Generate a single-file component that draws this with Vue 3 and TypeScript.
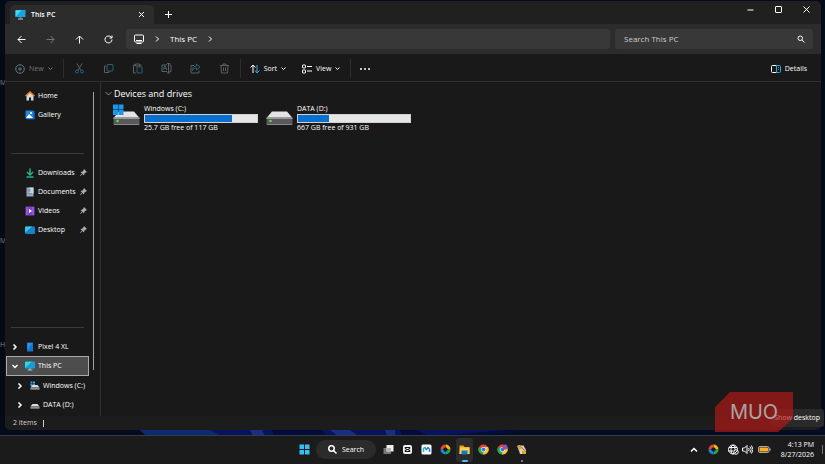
<script setup lang="ts">
import { ref } from 'vue'

interface Place { name: string; icon: string }
interface Drive { name: string; total: number; free: string; used: number; system: boolean }

const quick: Place[] = [
  { name: 'Home', icon: 'home' },
  { name: 'Gallery', icon: 'gallery' },
]
const pinned: Place[] = [
  { name: 'Downloads', icon: 'downloads' },
  { name: 'Documents', icon: 'documents' },
  { name: 'Videos', icon: 'videos' },
  { name: 'Desktop', icon: 'desktop' },
]
const tree = [
  { name: 'Pixel 4 XL', icon: 'phone', child: false },
  { name: 'This PC', icon: 'pc', child: false },
  { name: 'Windows (C:)', icon: 'cdrive', child: true },
  { name: 'DATA (D:)', icon: 'ddrive', child: true },
]
const drives: Drive[] = [
  { name: 'Windows (C:)', total: 117, free: '25.7', used: 78, system: true },
  { name: 'DATA (D:)', total: 931, free: '667', used: 28, system: false },
]
const tools = ['Cut', 'Copy', 'Paste', 'Rename', 'Share', 'Delete']
const apps = ['Task View', 'CapCut', 'Maps', 'Copilot', 'File Explorer', 'Chrome', 'Chrome Profile', 'Paint']
const selected = ref('This PC')
const query = ref('')
</script>

<template>
  <div class="desktop">
    <svg class="wallpaper" viewBox="0 0 825 6" preserveAspectRatio="none" aria-hidden="true">
      <rect width="825" height="6" fill="#050b1a" />
      <path d="M140 0H600L560 6H146Z" fill="#07145a" />
      <path d="M140 0H210L222 6H146Z" fill="#0b2a70" />
      <path d="M250 0h12l3 6h-12zM330 0h20l8 6h-20zM385 0h10v6h-8z" fill="#182f86" />
      <path d="M272 0h50l4 6h-52zM400 0h18l10 6h-26zM505 0h30l-50 6h-50z" fill="#040c3c" />
      <path d="M530 0H825V6H480Z" fill="#050d24" />
    </svg>
    <span class="peek peek-a" aria-hidden="true">M</span>
    <span class="peek peek-b" aria-hidden="true">M</span>
    <span class="peek peek-c" aria-hidden="true">H</span>

    <main class="window">
      <header class="tabs">
        <div class="tab">
          <svg class="i11" viewBox="0 0 22 22"><rect x="1" y="2" width="20" height="14" rx="1" fill="#17a5dd" /><path d="M1 16V3l12-1z" fill="#4cd6ee" /><path d="M9 16h4v3H9z" fill="#4b8196" /><path d="M6 19h10v2H6z" fill="#b5c7cf" /></svg>
          <span class="tab-name">This PC</span>
          <button aria-label="Close tab" class="tab-close"><svg class="i7 line" viewBox="0 0 14 14"><path d="m2 2 10 10M12 2 2 12" /></svg></button>
        </div>
        <button aria-label="New tab" class="tab-new"><svg class="i7 line" viewBox="0 0 14 14"><path d="M7 0v14M0 7h14" /></svg></button>
        <div class="caption">
          <button aria-label="Minimize"><svg class="i7 line" viewBox="0 0 14 14"><path d="M1 8h12" /></svg></button>
          <button aria-label="Maximize"><svg class="i7 line" viewBox="0 0 14 14"><rect x="1" y="1" width="12" height="12" rx="1" /></svg></button>
          <button aria-label="Close"><svg class="i7 line" viewBox="0 0 14 14"><path d="m1 1 12 12M13 1 1 13" /></svg></button>
        </div>
      </header>

      <div class="navbar">
        <div class="history">
          <button aria-label="Back"><svg class="i9 line" viewBox="0 0 18 18"><path d="M17 9H2m7-7L2 9l7 7" /></svg></button>
          <button aria-label="Forward" class="off"><svg class="i9 line" viewBox="0 0 18 18"><path d="M1 9h15M9 2l7 7-7 7" /></svg></button>
          <button aria-label="Up"><svg class="i9 line" viewBox="0 0 18 18"><path d="M9 17V2M2 9l7-7 7 7" /></svg></button>
          <button aria-label="Refresh"><svg class="i9 line" viewBox="0 0 18 18"><path d="M16 9a7 7 0 1 1-2-5l2 2M16 1v5h-5" /></svg></button>
        </div>
        <nav class="address" aria-label="Address">
          <svg class="i10 line" viewBox="0 0 20 20"><rect x="1" y="2" width="18" height="14" rx="2" /><path d="M4 13h12M5 19h10" /></svg>
          <svg class="i6 line" viewBox="0 0 12 12"><path d="m4 1 5 5-5 5" /></svg>
          <a href="#">This PC</a>
          <svg class="i6 line" viewBox="0 0 12 12"><path d="m4 1 5 5-5 5" /></svg>
        </nav>
        <label class="search">
          <input v-model="query" type="text" aria-label="Search This PC" placeholder="Search This PC">
          <svg class="i8 line" viewBox="0 0 16 16"><circle cx="6.5" cy="6.5" r="4.5" /><path d="m10 10 5 5" /></svg>
        </label>
      </div>

      <div class="commands">
        <button class="new-btn off"><svg class="i10 line" viewBox="0 0 20 20"><circle cx="10" cy="10" r="8.5" /><path class="blue" d="M10 6v8M6 10h8" /></svg>New<svg class="i5 line" viewBox="0 0 10 10"><path d="m1 3 4 4 4-4" /></svg></button>
        <span class="rule"></span>
        <div class="tools">
          <button v-for="t in tools" :key="t" :aria-label="t" class="dim">
            <svg class="i11 line" viewBox="0 0 22 22">
              <template v-if="t === 'Cut'"><path d="m6 1 8 14M16 1 8 15" /><g class="blue"><circle cx="6" cy="17" r="3" /><circle cx="16" cy="17" r="3" /></g></template>
              <template v-else-if="t === 'Copy'"><path d="M7 6H3v13h9v-3" /><rect class="blue" x="8" y="3" width="12" height="13" rx="2" /></template>
              <template v-else-if="t === 'Paste'"><path d="M8 20H3V4h4m8 0h3v3M7 2h8v4H7z" /><rect class="blue" x="10" y="8" width="10" height="12" rx="1" /></template>
              <template v-else-if="t === 'Rename'"><path d="M12 4H2v13h10m5 0h3V4h-3M15 1v19m-3-19h6m-6 19h6" /><path class="blue" d="m4 14 4-9 4 9M6 11h5" /></template>
              <template v-else-if="t === 'Share'"><path d="M8 5H2v15h16v-5" /><path class="blue" d="m13 2 7 6-7 6v-4c-4 0-6 1-8 5 0-6 3-9 8-9z" /></template>
              <template v-else><path d="M2 5h18M8 5V2h6v3M4 5l1 15h12l1-15M9 9v7m4-7v7" /></template>
            </svg>
          </button>
        </div>
        <span class="rule"></span>
        <button class="sort-btn"><svg class="i10 line" viewBox="0 0 20 20"><path d="M6 18V2M1 7l5-5 5 5" /><path class="sky" d="M14 2v16m-4-5 4 5 5-5" /></svg>Sort<svg class="i5 line" viewBox="0 0 10 10"><path d="m1 3 4 4 4-4" /></svg></button>
        <button class="view-btn"><svg class="i10 line" viewBox="0 0 20 20"><rect x="1" y="2" width="6" height="6" rx="1" /><rect x="1" y="12" width="6" height="6" rx="1" /><path d="M10 5h10m-10 9h10" /></svg>View<svg class="i5 line" viewBox="0 0 10 10"><path d="m1 3 4 4 4-4" /></svg></button>
        <span class="rule"></span>
        <button aria-label="More" class="more"><svg class="i10" viewBox="0 0 20 20" fill="#fff"><circle cx="2" cy="10" r="2" /><circle cx="10" cy="10" r="2" /><circle cx="18" cy="10" r="2" /></svg></button>
        <button class="details"><svg class="i10 line" viewBox="0 0 20 20"><path d="M11 17H3a2 2 0 0 1-2-2V5q0-2 2-2h8" /><path class="sky" d="M11 3h6q2 0 2 2v10q0 2-2 2h-6zM14 7h2m-2 4h2" /></svg>Details</button>
      </div>

      <div class="body">
        <aside class="sidebar">
          <nav class="places" aria-label="Folders">
            <a v-for="p in [...quick, ...pinned]" :key="p.name" href="#" class="place" :class="{ 'first-pinned': p.name === 'Downloads' }">
              <svg class="i10" viewBox="0 0 20 20">
                <template v-if="p.icon === 'home'"><path d="M3 9v10h5v-6h4v6h5V9l-7-6z" fill="#d6d6d6" /><path d="m1 10 9-8 9 8" fill="none" stroke="#e87624" stroke-width="3" /></template>
                <template v-else-if="p.icon === 'gallery'"><rect x="4" y="2" width="16" height="17" rx="2" fill="#0b54a5" /><rect x="1" y="1" width="16" height="17" rx="2" fill="#2583dc" /><path d="m2 16 6-8 8 8z" fill="#fff" /><circle cx="12" cy="6" r="2" fill="#fff" /></template>
                <template v-else-if="p.icon === 'downloads'"><path d="M10 1v13M4 8l6 6 6-6M3 18h14" fill="none" stroke="#19b68c" stroke-width="3" /></template>
                <template v-else-if="p.icon === 'documents'"><path d="M3 1h14v18H3z" fill="#91a9c1" /><path d="M9 1h8v12H9z" fill="#c5d5e4" /><path d="M6 5h5v4H6zm0 7h8v2H6z" fill="#7690a8" /></template>
                <template v-else-if="p.icon === 'videos'"><rect x="1" y="1" width="18" height="18" rx="2" fill="#8040cd" /><path d="M4 3v14M16 3v14" stroke="#c89af3" stroke-width="2" stroke-dasharray="2 2" /><path d="m8 6 6 4-6 4z" fill="#fff" /></template>
                <template v-else><rect y="3" width="20" height="15" rx="2" fill="#1582cb" /><path d="M0 15V5q0-2 2-2h13z" fill="#35c9dc" /></template>
              </svg>
              <span>{{ p.name }}</span>
              <svg v-if="pinned.includes(p)" class="i7 pin" viewBox="0 0 14 14"><path d="m8 0 6 6-2 1-3 2-1 4-3-3-4 4-1-1 4-4-3-3 4-1 2-3z" fill="#a1adb5" /></svg>
            </a>
            <div class="tree">
              <a v-for="n in tree" :key="n.name" href="#" class="node" :class="{ child: n.child, selected: n.name === selected }" @click.prevent="selected = n.name">
                <svg class="i6 line bold chevron" viewBox="0 0 12 12"><path :d="n.icon === 'pc' ? 'm1 4 5 5 5-5' : 'm3 1 5 5-5 5'" /></svg>
                <svg class="i10" viewBox="0 0 20 20">
                  <template v-if="n.icon === 'phone'"><rect x="4" y="1" width="12" height="18" rx="1" fill="#1474d2" /><path d="M5 2h10L5 16z" fill="#2d93e7" /></template>
                  <template v-else-if="n.icon === 'pc'"><rect y="1" width="20" height="14" rx="1" fill="#169dd7" /><path d="M0 14V2l14-1z" fill="#35d5df" /><path d="M8 15h4v2h3v2H5v-2h3z" fill="#91bed2" /></template>
                  <template v-else><path v-if="n.icon === 'cdrive'" d="M1 1h4v4H1zm5 0h4v4H6zM1 6h4v4H1zm5 0h4v4H6z" fill="#2aa5ee" /><path d="m5 8-4 5h18l-4-5z" fill="#ddd" /><rect x="1" y="13" width="18" height="4" fill="#777" /><path d="M1 16h18" stroke="#ddd" /></template>
                </svg>
                <span>{{ n.name }}</span>
              </a>
            </div>
          </nav>
          <div class="scroll"></div>
        </aside>

        <section class="content">
          <h2><svg class="i7 line thin" viewBox="0 0 14 14"><path d="m1 4 6 6 6-6" /></svg>Devices and drives</h2>
          <div class="drives">
            <article v-for="d in drives" :key="d.name" class="drive">
              <svg class="drive-icon" viewBox="0 0 54 44">
                <path d="M12 15h30l11 13H1z" fill="#e3e3e5" /><rect x="1" y="27" width="52" height="15" rx="1" fill="#58595b" /><path d="M1 27h52v3H1z" fill="#999" /><path d="M2 41h50" stroke="#bbb" /><circle cx="9" cy="34" r="2.5" fill="#3bf24b" />
                <path v-if="d.system" d="M0 1h10v10H0zm11 0h10v10H11zM0 12h10v10H0zm11 0h10v10H11z" fill="#1999ed" />
              </svg>
              <div class="drive-info">
                <span>{{ d.name }}</span>
                <div class="bar" role="meter" :aria-valuenow="d.used" aria-valuemin="0" aria-valuemax="100" :aria-label="d.name"><div class="used" :style="{ width: d.used + '%' }"></div></div>
                <span>{{ d.free }} GB free of {{ d.total }} GB</span>
              </div>
            </article>
          </div>
        </section>
      </div>
      <footer class="status"><span>2 items</span><i></i></footer>
    </main>

    <div class="taskbar">
      <div class="launch">
        <button aria-label="Start" class="start"><svg class="i11" viewBox="0 0 22 22"><path d="M1 1h9v9H1zm11 0h9v9h-9zM1 12h9v9H1zm11 0h9v9h-9z" fill="#36bff5" /></svg></button>
        <button class="pill"><svg class="i9 line bold" viewBox="0 0 18 18"><circle cx="7" cy="7" r="5.5" /><path d="m11 11 6 6" /></svg>Search</button>
        <button v-for="a in apps" :key="a" :aria-label="a" class="app" :class="{ active: a === 'File Explorer', running: a === 'Paint' }">
          <svg class="i11" viewBox="0 0 22 22">
            <template v-if="a === 'Task View'"><path d="M1 8h15v12H1z" fill="#777" /><path d="M7 2h14v13H7z" fill="#eee" /><path d="M7 8h9v7H7z" fill="#b6b6b6" /></template>
            <template v-else-if="a === 'CapCut'"><rect x="2" y="2" width="18" height="18" rx="4" fill="#f5f5f5" /><path d="M16 9V7H6v2l10 4v2H6v-2l10-4" fill="none" stroke="#111" stroke-width="2" /></template>
            <template v-else-if="a === 'Maps'"><rect x="1" y="1" width="20" height="20" rx="3" fill="#fff" /><path d="M5 16V9l3-2 3 5" fill="none" stroke="#22b7b4" stroke-width="3" /><path d="m10 12 4-5 3 3v6" fill="none" stroke="#3477ea" stroke-width="3" /></template>
            <template v-else-if="a === 'Copilot'"><g fill="none" stroke-width="6"><path d="M11 4a7 7 0 0 1 7 7" stroke="#f9b713" /><path d="M18 11a7 7 0 0 1-7 7" stroke="#25a84b" /><path d="M11 18a7 7 0 0 1-7-7" stroke="#1688ed" /><path d="M4 11a7 7 0 0 1 7-7" stroke="#ea433b" /></g><circle cx="11" cy="11" r="4" fill="#151c27" /></template>
            <template v-else-if="a === 'File Explorer'"><path d="M1 3h8l2 3h10v14H1z" fill="#e4a21a" /><path d="M2 7h19v13H1z" fill="#ffce4b" /><path d="M5 13h12v8H5z" fill="#1478ca" /></template>
            <template v-else-if="a.startsWith('Chrome')"><circle cx="11" cy="11" r="10" fill="#ea4335" /><path d="M11 11 2 6a10 10 0 0 0 8 15l5-8z" fill="#28a64b" /><path d="M11 11 10 21A10 10 0 0 0 20 6h-9z" fill="#fac32d" /><circle cx="11" cy="11" r="5" fill="#fff" /><circle cx="11" cy="11" r="4" fill="#287de8" /><circle v-if="a === 'Chrome Profile'" cx="16" cy="6" r="5" fill="#9b4cb4" /></template>
            <template v-else><path d="M3 3h12l5 9v8H8z" fill="#d9d4c7" /><path d="m2 4 6-2 3 8-6 2zM12 13h8v7h-8z" fill="#dba62a" /><path d="m10 5 7 8" stroke="#716853" stroke-width="2" /></template>
          </svg>
        </button>
      </div>
      <div class="tray">
        <button aria-label="Hidden icons"><svg class="i8 line bold" viewBox="0 0 16 16"><path d="m2 11 6-6 6 6" /></svg></button>
        <svg class="i11 tray-app" viewBox="0 0 22 22"><g fill="none" stroke-width="6"><path d="M11 4a7 7 0 0 1 7 7" stroke="#f9b713" /><path d="M18 11a7 7 0 0 1-7 7" stroke="#25a84b" /><path d="M11 18a7 7 0 0 1-7-7" stroke="#1688ed" /><path d="M4 11a7 7 0 0 1 7-7" stroke="#ea433b" /></g><circle cx="11" cy="11" r="4" fill="#151c27" /></svg>
        <svg class="i11 line globe" viewBox="0 0 22 22"><circle cx="10" cy="11" r="9" /><ellipse cx="10" cy="11" rx="4" ry="9" /><path d="M2 7h16M1 14h10" /><circle cx="16" cy="16" r="4.5" fill="#1b1b1b" /><path d="m13 19 6-6" /></svg>
        <svg class="i11 line sound" viewBox="0 0 22 22"><path d="M1 8h4l5-5v16l-5-5H1zM13 8q3 3 0 6M16 5q5 6 0 12M19 3q6 8 0 16" /></svg>
        <svg class="battery" viewBox="0 0 26 14"><rect x="1" y="1" width="21" height="12" rx="3" fill="none" stroke="#ddd" stroke-width="1.5" /><rect x="3" y="3" width="17" height="8" rx="1" fill="#ffb01c" /><path d="M24 5v4" stroke="#ddd" stroke-width="2" /></svg>
        <time><span>4:13 PM</span><span>8/27/2026</span></time>
        <button aria-label="Show desktop" class="show"></button>
      </div>
    </div>

    <div class="tooltip" role="tooltip">Show desktop</div>
    <div class="watermark"><span>MUO</span></div>
  </div>
</template>

<style>
body { margin: 0; background: #050b1a; }
</style>

<style scoped>
* { box-sizing: border-box; }
.desktop { position: relative; display: flex; flex-direction: column; height: 100vh; padding-top: 1px; overflow: hidden; background: #040a17; color: #fff; font: 500 7px/10px "Open Sans", "Noto Sans", sans-serif; }
button { display: flex; align-items: center; justify-content: center; padding: 0; border: 0; background: none; color: inherit; font: inherit; }
a { color: inherit; text-decoration: none; }
svg { display: block; flex: none; }
.line { fill: none; stroke: currentColor; stroke-width: 2; }
.thin { stroke-width: 1; }
.bold { stroke-width: 3; }
.i5 { width: 5px; height: 5px; } .i6 { width: 6px; height: 6px; } .i7 { width: 7px; height: 7px; }
.i8 { width: 8px; height: 8px; } .i9 { width: 9px; height: 9px; } .i10 { width: 10px; height: 10px; } .i11 { width: 11px; height: 11px; }
.blue { stroke: #3c829f; } .sky { stroke: #39a5d7; }
.wallpaper { position: absolute; left: 0; bottom: 28px; width: 100%; height: 6px; }
.peek { position: absolute; left: 0; color: #85837f; }
.peek-a { top: 78px; } .peek-b { top: 236px; } .peek-c { top: 340px; }
.window { position: relative; display: flex; flex: 1; flex-direction: column; min-height: 0; margin: 0 4px 5px 5px; overflow: hidden; border-radius: 5px; background: #191919; }
.tabs { display: flex; height: 23px; flex: none; background: #202020; }
.tab { display: flex; align-items: center; width: 144px; margin: 4px 0 0 5px; padding: 0 8px 0 5px; border-radius: 5px 5px 0 0; background: #2c2c2c; }
.tab-name { flex: 1; margin-left: 5px; font-weight: 600; }
.tab-close { width: 9px; height: 9px; }
.tab-new { width: 9px; margin: 4px 0 0 10px; }
.caption { display: flex; gap: 17px; height: 16px; margin-left: auto; padding-right: 9px; }
.caption button { width: 11px; }
.navbar { display: flex; align-items: center; gap: 5px; height: 30px; flex: none; padding-right: 8px; background: #2c2c2c; }
.history { display: flex; gap: 20px; width: 116px; padding-left: 12px; }
.off { color: #777; } .dim { color: #5f5f5f; } .dim .blue { stroke: #2d5f75; }
.address, .search { display: flex; align-items: center; height: 20px; border-radius: 3px; background: #383838; font-size: 8px; }
.address { flex: 1; gap: 10px; padding-left: 8px; }
.search { width: 198px; padding: 0 8px 0 9px; }
.search input { flex: 1; min-width: 0; padding: 0; border: 0; outline: 0; background: none; color: #ddd; font: inherit; }
.search input::placeholder { color: #ccc; opacity: 1; }
.commands { display: flex; align-items: center; height: 28px; flex: none; padding: 2px 14px 0 0; border-bottom: 1px solid #303030; }
.commands button { gap: 4px; }
.new-btn { margin-left: 10px; }
.rule { width: 1px; height: 19px; margin-left: 10px; background: #2d2d2d; }
.tools { display: flex; gap: 18px; padding-left: 10px; }
.sort-btn { margin-left: 9px; } .view-btn { margin-left: 16px; } .more { margin-left: 9px; }
.commands .details { margin-left: auto; }
.body { display: flex; flex: 1; min-height: 0; }
.sidebar { display: flex; width: 96px; border-right: 1px solid #303030; }
.places { display: flex; flex: 1; flex-direction: column; padding: 4px 0 0 1px; }
.place, .node { display: flex; align-items: center; height: 19px; gap: 3px; white-space: nowrap; }
.place { padding: 0 2px 0 19px; }
.first-pinned { position: relative; margin-top: 39px; }
.first-pinned::before, .tree::before { position: absolute; top: -10px; left: 5px; width: 73px; height: 1px; background: #3a3a3a; content: ""; }
.pin { margin-left: auto; }
.tree { position: relative; margin-top: 98px; }
.node { width: 83px; padding-left: 6px; }
.child { padding-left: 11px; }
.node .chevron { margin-right: 4px; }
.node.selected { height: 20px; padding-left: 5px; border: 1px solid #aaa; background: #4d4d4d; }
.scroll { width: 1px; margin: 10px 6px 46px 4px; background: #a2a2a2; }
.content { flex: 1; padding: 5px 4px; }
h2 { display: flex; align-items: center; gap: 2px; height: 13px; margin: 0; font-size: 9px; font-weight: 400; }
.drives { display: flex; flex-wrap: wrap; gap: 8px; padding: 4px 0 0 8px; }
.drive { display: flex; gap: 4px; }
.drive-icon { width: 27px; height: 22px; }
.drive-info { width: 114px; }
.drive-info span { display: block; line-height: 10px; }
.bar { height: 9px; border: 1px solid #d1d1d1; background: #e6e6e6; }
.used { height: 100%; background: #0a70cf; }
.status { display: flex; align-items: center; gap: 6px; height: 14px; flex: none; padding-left: 8px; background: #1c1c1c; color: #d0d0d0; }
.status i { width: 1px; height: 7px; background: #ccc; }
.taskbar { position: relative; display: grid; grid-template-columns: 1fr auto 1fr; height: 29px; flex: none; border-top: 1px solid #333b45; background: #1b1b1c; }
.launch { display: flex; grid-column: 2; align-items: center; height: 27px; }
.start { width: 20px; }
.pill { gap: 5px; width: 60px; height: 19px; margin: 0 3px 0 2px; border-radius: 10px; background: #2b2b2b; }
.app { position: relative; width: 17px; height: 24px; margin: 0 1px; border-radius: 3px; }
.active { background: #2c2c2c; }
.active::after, .running::after { position: absolute; bottom: 0; width: 6px; height: 2px; border-radius: 1px; background: #4db8ef; content: ""; }
.running::after { width: 2px; background: #999; }
.tray { display: flex; align-items: center; justify-content: flex-end; height: 27px; }
.tray-app { margin: 0 9px 0 10px; }
.sound { margin: 0 5px 0 3px; }
.battery { width: 13px; height: 7px; }
time { display: grid; width: 43px; text-align: right; }
.show { width: 1px; height: 9px; margin: 0 2px 0 8px; background: #777; }
.watermark { position: absolute; right: 32px; bottom: 32px; display: flex; width: 78px; height: 40px; align-items: center; justify-content: center; background: rgba(180, 25, 20, .68); color: #aaa4a3; clip-path: polygon(0 38%, 19% 0, 100% 0, 100% 66%, 81% 100%, 0 100%); font: 400 20px/20px Inter, sans-serif; }
.tooltip { position: absolute; right: 1px; bottom: 37px; padding: 4px; border-radius: 3px; background: #2a2a2a; }
</style>
